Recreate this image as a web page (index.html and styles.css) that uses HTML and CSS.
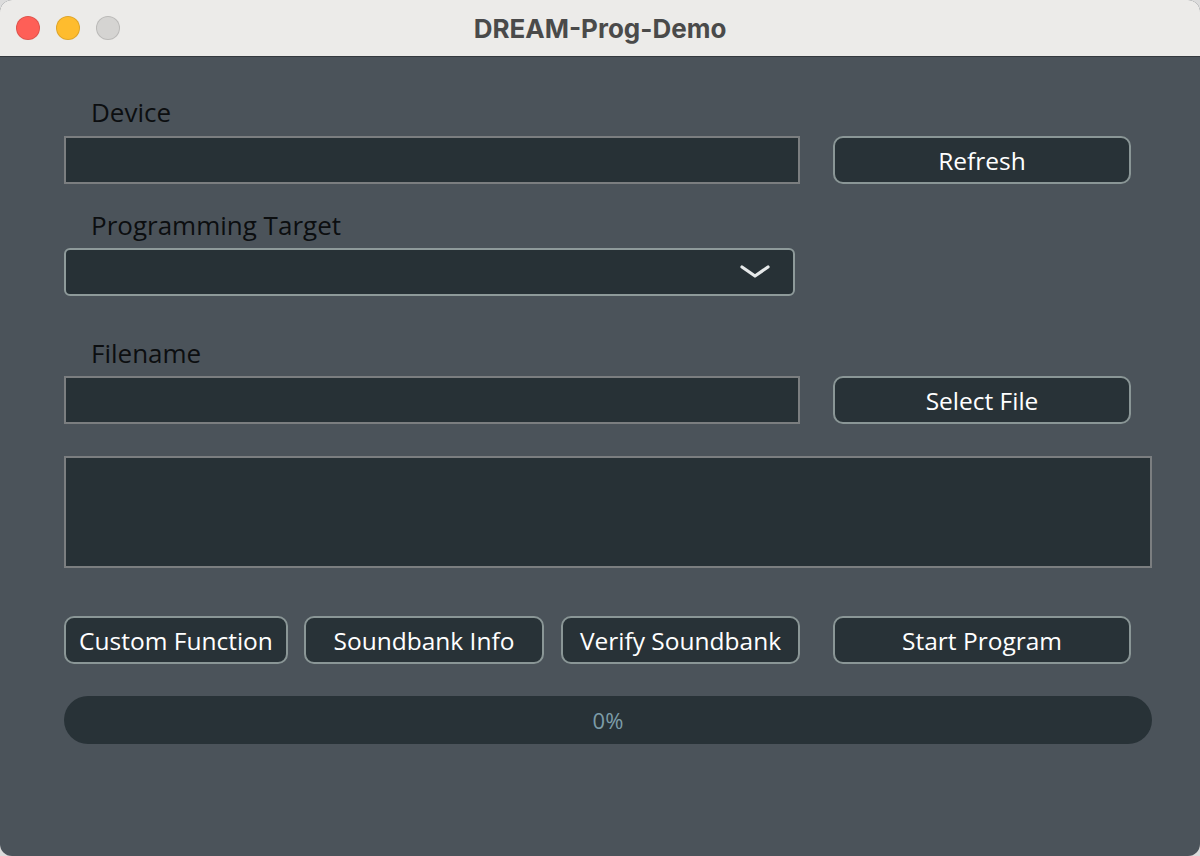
FILE: index.html
```html
<!DOCTYPE html>
<html lang="en">
<head>
  <meta charset="UTF-8" />
  <meta name="viewport" content="width=device-width, initial-scale=1.0"/>
  <title>DREAM-Prog-Demo</title>
  <link rel="stylesheet" href="styles.css">
</head>
<body>
  <div class="window">
    <div class="titlebar">
      <div class="lights">
        <span class="light red"></span>
        <span class="light yellow"></span>
        <span class="light grey"></span>
      </div>
      <div class="title">DREAM-Prog-Demo</div>
    </div>

    <div class="content">
      <label class="field-label" for="deviceInput">Device</label>
      <div class="row">
        <input type="text" id="deviceInput" class="text-input" />
        <button type="button" class="btn wide">Refresh</button>
      </div>

      <label class="field-label second" for="targetSelect">Programming Target</label>
      <div class="select" id="targetSelect">
        <svg class="chevron" width="32" height="16" viewBox="0 0 32 16">
          <polyline points="3,3 16,12 29,3" fill="none" stroke="#e6e9ea" stroke-width="3.2" stroke-linecap="round" stroke-linejoin="round"/>
        </svg>
      </div>

      <label class="field-label third" for="fileInput">Filename</label>
      <div class="row">
        <input type="text" id="fileInput" class="text-input" />
        <button type="button" class="btn wide">Select File</button>
      </div>

      <textarea class="log"></textarea>

      <div class="actions">
        <button type="button" class="btn custom">Custom Function</button>
        <button type="button" class="btn info">Soundbank Info</button>
        <button type="button" class="btn verify">Verify Soundbank</button>
        <button type="button" class="btn wide">Start Program</button>
      </div>

      <div class="progress"><span>0%</span></div>
    </div>
  </div>
</body>
</html>
```

FILE: styles.css
```css
html {
  background: #dcdcdc;
}
body {
  margin: 0;
  font-family: 'Open Sans', 'DejaVu Sans', sans-serif;
}
.window {
  width: 1200px;
  height: 856px;
  border-radius: 12px;
  overflow: hidden;
  background: #4b535a;
  display: flex;
  flex-direction: column;
}
.titlebar {
  height: 56px;
  background: #ecebe9;
  border-bottom: 1px solid #34393e;
  display: flex;
  align-items: center;
  justify-content: center;
  position: relative;
}
.lights {
  position: absolute;
  left: 16px;
  top: 16px;
  display: flex;
  gap: 16px;
}
.light {
  width: 22px;
  height: 22px;
  border-radius: 50%;
  border: 1px solid rgba(0,0,0,0.12);
}
.red { background: #fe5f57; }
.yellow { background: #febc2e; }
.grey { background: #d5d4d2; }
.title {
  font-family: 'Inter', 'Open Sans', sans-serif;
  font-weight: 700;
  font-size: 26px;
  color: #4a4a4a;
}
.content {
  padding: 43px 48px 0 64px;
  display: flex;
  flex-direction: column;
}
.field-label {
  display: block;
  padding-left: 27px;
  font-size: 26px;
  line-height: 24px;
  color: #0c0e10;
  margin-bottom: 12px;
}
.field-label.second {
  margin-top: 29px;
  margin-bottom: 11px;
}
.field-label.third {
  margin-top: 45px;
  margin-bottom: 11px;
}
.row {
  display: flex;
  gap: 33px;
  width: 1067px;
}
.text-input {
  box-sizing: border-box;
  width: 736px;
  height: 48px;
  margin: 0;
  background: #273136;
  border: 2px solid #7b7e80;
  outline: none;
}
.select {
  box-sizing: border-box;
  width: 731px;
  height: 48px;
  background: #273136;
  border: 2px solid #8e9a9a;
  border-radius: 6px;
  display: flex;
  align-items: center;
  justify-content: flex-end;
  padding-right: 22px;
}
.btn {
  box-sizing: border-box;
  height: 48px;
  margin: 0;
  background: #283237;
  border: 2px solid #8a9696;
  border-radius: 10px;
  color: #ffffff;
  font-family: 'Open Sans', 'DejaVu Sans', sans-serif;
  font-weight: 500;
  font-size: 24.5px;
  padding: 0;
}
.wide {
  width: 298px;
}
.log {
  box-sizing: border-box;
  width: 1088px;
  height: 112px;
  margin: 32px 0 0;
  background: #273136;
  border: 2px solid #7b7e80;
  resize: none;
  outline: none;
}
.actions {
  display: flex;
  margin-top: 48px;
}
.custom { width: 224px; }
.info { width: 240px; margin-left: 16px; }
.verify { width: 239px; margin-left: 17px; }
.actions .wide { margin-left: 33px; }
.progress {
  margin-top: 32px;
  width: 1088px;
  height: 48px;
  border-radius: 24px;
  background: #283237;
  display: flex;
  align-items: center;
  justify-content: center;
  font-size: 22px;
  color: #7c9ca8;
}
```
